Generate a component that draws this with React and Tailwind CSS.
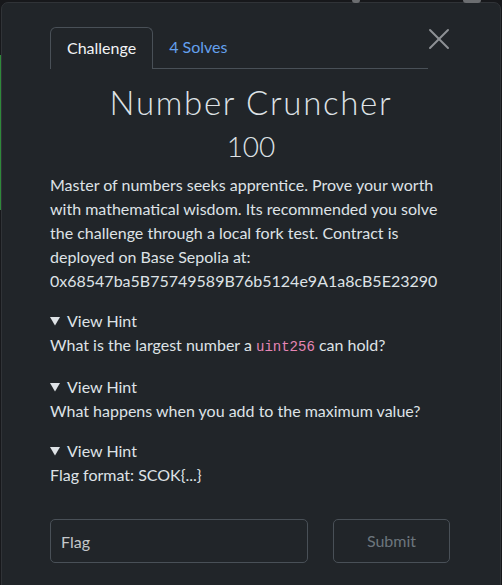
import { X } from 'lucide-react';

const hints = [
  {
    text: (
      <>
        What is the largest number a{' '}
        <code className="font-['Liberation_Mono',monospace] text-[14px] text-[#e685b5]">uint256</code> can hold?
      </>
    ),
  },
  { text: 'What happens when you add to the maximum value?' },
  { text: 'Flag format: SCOK{...}' },
];

function Hint({ children }) {
  return (
    <div className="mb-4">
      <div className="flex items-center h-6">
        <svg width="10" height="9" viewBox="0 0 10 9" className="mr-[7px]">
          <polygon points="0,0 10,0 5,8.5" fill="#dee2e6" />
        </svg>
        <span>View Hint</span>
      </div>
      <p>{children}</p>
    </div>
  );
}

export default function App() {
  return (
    <div className="relative w-[502px] h-[585px] overflow-hidden bg-[#17181b] font-['Lato',sans-serif] text-[16px] leading-6 text-[#dee2e6]">
      <div className="absolute left-0 top-[55px] w-[1px] h-[155px] bg-[#2f8a3a]" />
      <div className="absolute left-[352px] top-0 w-[8px] h-[3px] rounded-b bg-[#6b6d70]" />
      <div className="absolute left-[463px] top-0 w-[18px] h-[3px] rounded-b bg-[#6b6d70]" />

      <div className="ml-[1px] mt-[2px] w-[500px] h-[600px] rounded-t-[7px] border border-[#303337] bg-[#212529] px-12 pt-6">
        <div className="relative flex items-start">
          <div className="flex w-[378px] border-b border-[#495057]">
            <div className="-mb-px h-[42px] rounded-t-[6px] border border-b-0 border-[#495057] bg-[#212529] px-4 py-2 text-[#f2f3f5]">
              Challenge
            </div>
            <div className="px-4 py-2 text-[#64a0ee]">4 Solves</div>
          </div>
          <button className="absolute left-[371px] top-[-6px] text-[#8e9195]">
            <X size={36} strokeWidth={1.3} />
          </button>
        </div>

        <h1 className="mt-[14px] text-center text-[33px] font-light leading-[1.2] tracking-[1.7px] text-[#dee2e6]">
          Number Cruncher
        </h1>
        <h2 className="mt-[7px] text-center text-[28px] font-light leading-[1.2] text-[#dee2e6]">100</h2>

        <p className="mt-[10px] mb-4">
          Master of numbers seeks apprentice. Prove your worth with mathematical wisdom. Its recommended you solve
          the challenge through a local fork test. Contract is deployed on Base Sepolia at:
          0x68547ba5B75749589B76b5124e9A1a8cB5E23290
        </p>

        {hints.map((h, i) => (
          <Hint key={i}>{h.text}</Hint>
        ))}

        <div className="mt-8 flex gap-[25px]">
          <input
            placeholder="Flag"
            className="h-[44px] w-[258px] rounded-[5px] border border-[#495057] bg-transparent px-[10px] text-[16px] placeholder:text-[#c4c7ca] outline-none"
          />
          <button className="h-[44px] w-[117px] rounded-[5px] border border-[#495057] text-[#6c757d]">Submit</button>
        </div>
      </div>
    </div>
  );
}
